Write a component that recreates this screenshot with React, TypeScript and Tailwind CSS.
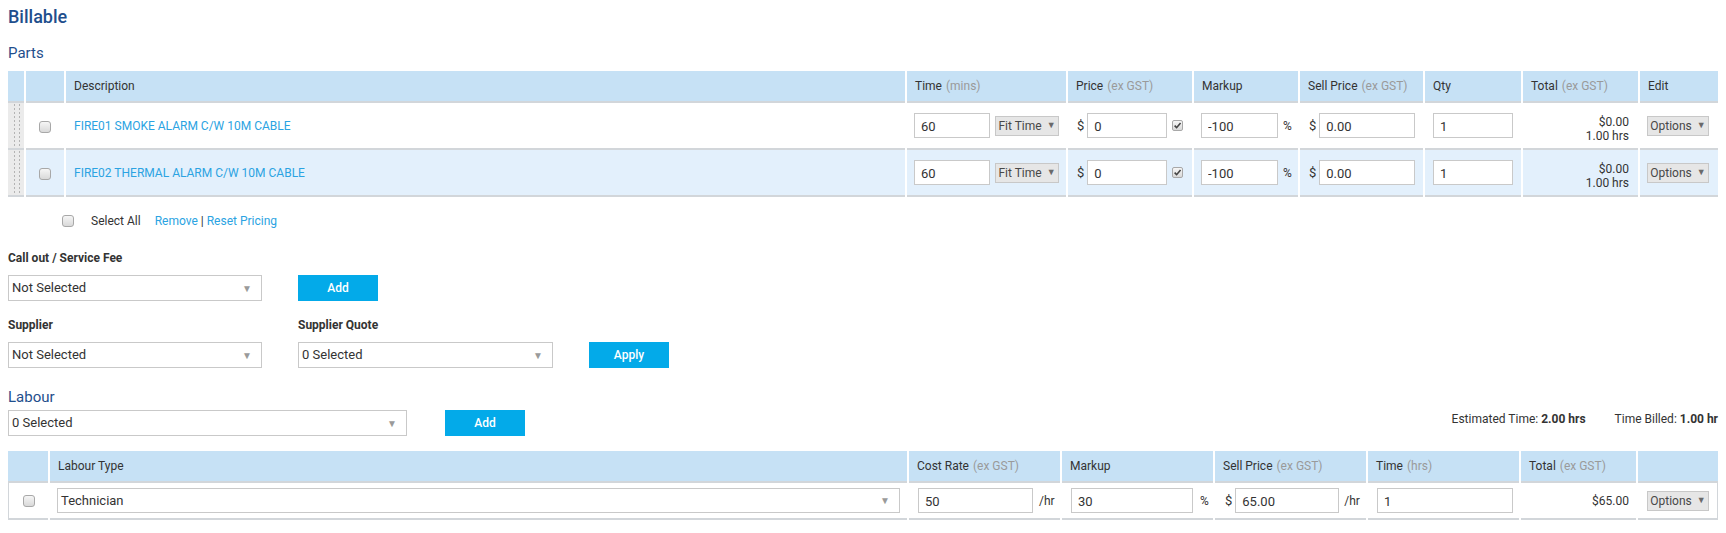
import React from "react";

const partsCols =
  "grid grid-cols-[16px_38px_minmax(0,1fr)_159px_124px_104px_123px_96px_115px_78px] gap-x-[2px]";
const labourCols =
  "grid grid-cols-[40px_minmax(0,1fr)_151px_151px_151px_151px_115px_80px] gap-x-[2px]";

function Tick() {
  return (
    <svg viewBox="0 0 10 10" className="h-[9px] w-[9px]">
      <path d="M1.8 5.2 L4 7.4 L8.4 2.2" fill="none" stroke="#444" strokeWidth="1.8" />
    </svg>
  );
}

function Checkbox({ checked = false }: { checked?: boolean }) {
  return (
    <span className="inline-flex h-[12px] w-[12px] items-center justify-center rounded-[3px] border border-[#a8a8a8] bg-linear-to-b from-[#f6f6f6] to-[#d9d9d9]">
      {checked && <Tick />}
    </span>
  );
}

function Field({ value, className }: { value: string; className: string }) {
  return (
    <input
      readOnly
      value={value}
      className={`h-[25px] border border-[#c9c9c9] bg-white px-[6px] pt-[1px] text-[13px] text-[#333] outline-none ${className}`}
    />
  );
}

function Dropdown({ value, className }: { value: string; className: string }) {
  return (
    <div
      className={`flex items-center justify-between border border-[#c9c9c9] bg-white pl-[3px] pr-[9px] text-[13px] text-[#333] ${className}`}
    >
      <span>{value}</span>
      <span className="text-[10px] text-[#9a9a9a]">▼</span>
    </div>
  );
}

function GreyButton({ label, className }: { label: string; className: string }) {
  return (
    <div
      className={`flex h-[20px] items-center justify-center gap-[5px] border border-[#c8c8c8] bg-[#e6e6e6] text-[12px] text-[#484848] ${className}`}
    >
      <span>{label}</span>
      <span className="text-[9px] text-[#6a6a6a]">▼</span>
    </div>
  );
}

function BlueButton({ label }: { label: string }) {
  return (
    <button className="flex h-[26px] w-[80px] items-center justify-center bg-[#03aae9] text-[12px] font-medium text-white">
      {label}
    </button>
  );
}

function Head({ label, note }: { label?: string; note?: string }) {
  return (
    <div className="flex h-[32px] items-center border-b-2 border-[#d2d6da] bg-[#c6e1f5] pl-[8px] text-[12px] text-[#333]">
      {label}
      {note && <span className="ml-[4px] text-[#9a9a9a]">{note}</span>}
    </div>
  );
}

const parts = [
  { desc: "FIRE01 SMOKE ALARM C/W 10M CABLE", bg: "bg-white" },
  { desc: "FIRE02 THERMAL ALARM C/W 10M CABLE", bg: "bg-[#e3f0fc]" },
];

export default function App() {
  return (
    <div className="min-h-screen w-full bg-white px-[8px] pt-[7px] font-['Roboto',sans-serif] text-[12px] text-[#333]">
      <h1 className="text-[18px] font-medium leading-[20px] text-[#1f4f8d]">Billable</h1>

      <h2 className="mt-[17px] text-[15px] leading-[18px] text-[#1f4f8d]">Parts</h2>

      {/* parts table */}
      <div className="mt-[9px]">
        <div className={partsCols}>
          <Head />
          <Head />
          <Head label="Description" />
          <Head label="Time" note="(mins)" />
          <Head label="Price" note="(ex GST)" />
          <Head label="Markup" />
          <Head label="Sell Price" note="(ex GST)" />
          <Head label="Qty" />
          <Head label="Total" note="(ex GST)" />
          <Head label="Edit" />
        </div>

        {parts.map((p) => (
          <div key={p.desc} className={partsCols}>
            <div className="h-[47px] border-b-2 border-[#d2d6da] bg-[#ebebeb] px-[4px]">
              <div className="h-full w-[10px] bg-[radial-gradient(circle,#b4b4b4_0.9px,transparent_1.1px)] bg-size-[5px_4px]" />
            </div>
            <div className={`flex h-[47px] items-center justify-center border-b-2 border-[#d2d6da] pt-[2px] ${p.bg}`}>
              <Checkbox />
            </div>
            <div className={`flex h-[47px] items-center border-b-2 border-[#d2d6da] pl-[8px] text-[12px] text-[#2ba3e2] ${p.bg}`}>
              {p.desc}
            </div>
            <div className={`flex h-[47px] items-center gap-[5px] border-b-2 border-[#d2d6da] pl-[7px] ${p.bg}`}>
              <Field value="60" className="w-[76px]" />
              <GreyButton label="Fit Time" className="w-[64px]" />
            </div>
            <div className={`flex h-[47px] items-center border-b-2 border-[#d2d6da] pl-[9px] text-[13px] ${p.bg}`}>
              <span>$</span>
              <Field value="0" className="ml-[3px] w-[80px]" />
              <span className="ml-[5px] flex">
                <span className="inline-flex h-[11px] w-[11px] items-center justify-center rounded-[2px] border border-[#a8a8a8] bg-linear-to-b from-[#f6f6f6] to-[#d9d9d9]">
                  <Tick />
                </span>
              </span>
            </div>
            <div className={`flex h-[47px] items-center border-b-2 border-[#d2d6da] pl-[7px] text-[12px] ${p.bg}`}>
              <Field value="-100" className="w-[77px]" />
              <span className="ml-[5px]">%</span>
            </div>
            <div className={`flex h-[47px] items-center border-b-2 border-[#d2d6da] pl-[9px] text-[13px] ${p.bg}`}>
              <span>$</span>
              <Field value="0.00" className="ml-[3px] w-[96px]" />
            </div>
            <div className={`flex h-[47px] items-center border-b-2 border-[#d2d6da] pl-[8px] ${p.bg}`}>
              <Field value="1" className="w-[80px]" />
            </div>
            <div className={`flex h-[47px] flex-col items-end justify-center border-b-2 border-[#d2d6da] pr-[9px] pt-[7px] text-[12px] leading-[14px] ${p.bg}`}>
              <span>$0.00</span>
              <span>1.00 hrs</span>
            </div>
            <div className={`flex h-[47px] items-center border-b-2 border-[#d2d6da] pl-[7px] ${p.bg}`}>
              <GreyButton label="Options" className="w-[62px]" />
            </div>
          </div>
        ))}
      </div>

      <div className="mt-[16px] flex h-[16px] items-center pl-[54px] text-[12px]">
        <Checkbox />
        <span className="ml-[17px]">Select All</span>
        <span className="ml-[14px] text-[#2ba3e2]">Remove</span>
        <span className="mx-[3px]">|</span>
        <span className="text-[#2ba3e2]">Reset Pricing</span>
      </div>

      <div className="mt-[21px] text-[12px] font-bold leading-[16px]">Call out / Service Fee</div>
      <div className="mt-[9px] flex items-center gap-[36px]">
        <Dropdown value="Not Selected" className="h-[26px] w-[254px]" />
        <BlueButton label="Add" />
      </div>

      <div className="mt-[16px] flex items-end gap-[36px]">
        <div className="flex w-[254px] flex-col gap-[9px]">
          <div className="text-[12px] font-bold leading-[16px]">Supplier</div>
          <Dropdown value="Not Selected" className="h-[26px] w-[254px]" />
        </div>
        <div className="flex w-[255px] flex-col gap-[9px]">
          <div className="text-[12px] font-bold leading-[16px]">Supplier Quote</div>
          <Dropdown value="0 Selected" className="h-[26px] w-[255px]" />
        </div>
        <BlueButton label="Apply" />
      </div>

      <h2 className="mt-[20px] text-[15px] leading-[18px] text-[#1f4f8d]">Labour</h2>
      <div className="mt-[4px] flex items-start justify-between">
        <div className="flex items-center gap-[38px]">
          <Dropdown value="0 Selected" className="h-[26px] w-[399px]" />
          <BlueButton label="Add" />
        </div>
        <div className="flex pt-[1px] text-[12px] leading-[16px]">
          <span>
            Estimated Time: <b>2.00 hrs</b>
          </span>
          <span className="ml-[29px]">
            Time Billed: <b>1.00 hr</b>
          </span>
        </div>
      </div>

      {/* labour table */}
      <div className="mt-[15px]">
        <div className={labourCols}>
          <Head />
          <Head label="Labour Type" />
          <Head label="Cost Rate" note="(ex GST)" />
          <Head label="Markup" />
          <Head label="Sell Price" note="(ex GST)" />
          <Head label="Time" note="(hrs)" />
          <Head label="Total" note="(ex GST)" />
          <Head />
        </div>
        <div className={labourCols}>
          <div className="flex h-[37px] items-center justify-center border-b-2 border-l border-[#d2d6da] bg-white">
            <Checkbox />
          </div>
          <div className="flex h-[37px] items-center border-b-2 border-[#d2d6da] bg-white px-[7px]">
            <Dropdown value="Technician" className="h-[25px] w-full" />
          </div>
          <div className="flex h-[37px] items-center border-b-2 border-[#d2d6da] bg-white pl-[9px] text-[12px]">
            <Field value="50" className="w-[115px]" />
            <span className="ml-[6px]">/hr</span>
          </div>
          <div className="flex h-[37px] items-center border-b-2 border-[#d2d6da] bg-white pl-[9px] text-[12px]">
            <Field value="30" className="w-[122px]" />
            <span className="ml-[7px]">%</span>
          </div>
          <div className="flex h-[37px] items-center border-b-2 border-[#d2d6da] bg-white pl-[10px] text-[13px]">
            <span>$</span>
            <Field value="65.00" className="ml-[3px] w-[104px]" />
            <span className="ml-[5px] text-[12px]">/hr</span>
          </div>
          <div className="flex h-[37px] items-center border-b-2 border-[#d2d6da] bg-white pl-[9px]">
            <Field value="1" className="w-[136px]" />
          </div>
          <div className="flex h-[37px] items-center justify-end border-b-2 border-[#d2d6da] bg-white pr-[7px] text-[12px]">
            $65.00
          </div>
          <div className="flex h-[37px] items-center border-b-2 border-r border-[#d2d6da] bg-white pl-[9px]">
            <GreyButton label="Options" className="w-[62px]" />
          </div>
        </div>
      </div>
    </div>
  );
}
